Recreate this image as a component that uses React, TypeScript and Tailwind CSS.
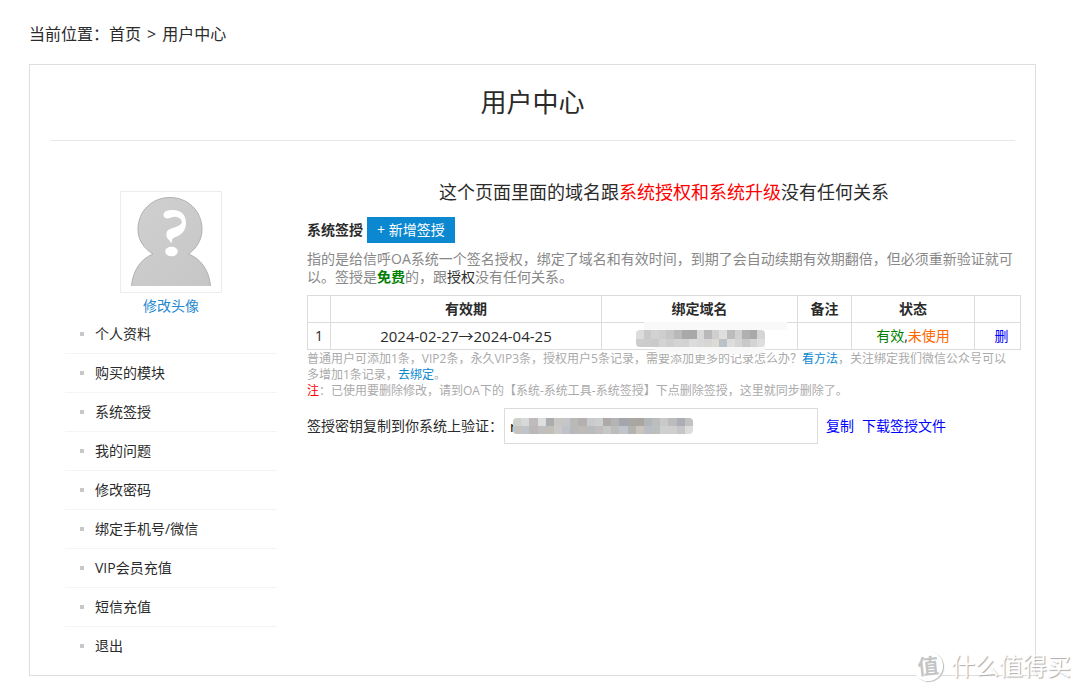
import React from "react";

const menu = [
  "个人资料",
  "购买的模块",
  "系统签授",
  "我的问题",
  "修改密码",
  "绑定手机号/微信",
  "VIP会员充值",
  "短信充值",
  "退出",
];

const domainCells = [
  ["#dcdcdc", "#c9c9c9", "#d2d2d2", "#cecece", "#c6c6c6", "#b9b9b9", "#a9a9a9", "#a8a8a8", "#d9d9d9", "#b9b9b9", "#cfcfcf", "#e0dedc", "#bcbcbc", "#d0d0d0", "#b0b0b0", "#a9a9a9", "#d5d5d5"],
  ["#cdcdcd", "#cccccc", "#cacaca", "#d4d4d4", "#cecece", "#d4d4d4", "#d2d2d2", "#dcdcdc", "#d8d8d8", "#d6d6d6", "#dedad4", "#b9c1c9", "#dcdcdc", "#d4d4d4", "#c9c9c9", "#d4d4d4", "#dedede"],
];

const keyCells = [
  ["#cfd2cc", "#d6d8da", "#bfbbbb", "#dcdedf", "#a9adad", "#c9c6c4", "#c4c6ca", "#b9b9b7", "#b5b0b0", "#c8cacc", "#cccfd0", "#aeaaa8", "#b4b4b4", "#a3a7ad", "#aaa6a2", "#aba5a0", "#b3b6b6", "#babebe", "#c9c9c9", "#bcbcbc", "#acaeb6", "#c2c2c2"],
  ["#c6c2be", "#bec4c8", "#bcb8b8", "#bfbfc0", "#c4beb8", "#c9c9c9", "#bfc2c9", "#b9b9b9", "#c0bab6", "#b8bcbe", "#c2bebe", "#c6c6c6", "#bbbdbd", "#bfc4ca", "#b3b3b1", "#cac4be", "#b9bec4", "#bbbfbf", "#cfcfcf", "#cfcfcf", "#c6c6c8", "#dcdcdc"],
];

function Mosaic({ rows, className }: { rows: string[][]; className: string }) {
  return (
    <svg
      className={className}
      viewBox={`0 0 ${rows[0].length} 2`}
      preserveAspectRatio="none"
      shapeRendering="crispEdges"
      aria-hidden="true"
    >
      {rows.map((row, y) =>
        row.map((fill, x) => <rect key={`${x}-${y}`} x={x} y={y} width="1" height="1" fill={fill} />),
      )}
    </svg>
  );
}

function Avatar() {
  return (
    <svg viewBox="0 0 100 100" className="size-[100px]" role="img" aria-label="头像">
      <defs>
        <linearGradient id="skin" x1="0" y1="0" x2="1" y2="1">
          <stop offset="0" stopColor="#d0d0d0" />
          <stop offset="1" stopColor="#c6c6c6" />
        </linearGradient>
      </defs>
      <path
        d="M10.500 94C12 78 20 67 32 62C22 56 17 47 17 37.500C17 19 31 5.500 49 5.500C67 5.500 81 19 81 37.500C81 47 76 56 67.500 62C80 67 88 78 89.500 94Z"
        fill="url(#skin)"
      />
      <path
        d="M10.500 94C12 78 20 67 32 62C22 56 17 47 17 37.500C17 19 31 5.500 49 5.500C67 5.500 81 19 81 37.500C81 47 76 56 67.500 62C80 67 88 78 89.500 94"
        fill="none"
        stroke="#b0b0b0"
        strokeWidth="1"
      />
      <path
        d="M42.500 23C42.500 19 47 18 52 18C60 18 65 23 65 31C65 39 60 43 54.500 45C51 46.500 51 47 51 50C50 51 49.500 51 49 49C46 47 45 44 45.500 41C46 37 51 36.500 56 34.500C62 32.500 62 28 58 26C55 24 52 25 49 26C45.500 27 42.500 26 42.500 23Z"
        fill="#fff"
      />
      <ellipse cx="50.500" cy="59.500" rx="6.300" ry="4.800" fill="#fff" />
    </svg>
  );
}

export default function App() {
  return (
    <div className="relative bg-white pt-[22px] pr-11 pb-[17px] pl-[29px] font-['Open_Sans','Noto_Sans_CJK_SC',sans-serif] text-sm text-[#2b2b2b]">
      <nav aria-label="当前位置" className="flex text-base leading-6">
        当前位置：<a href="#home">首页</a>
        <span className="px-[6px]">&gt;</span>
        <a href="#user">用户中心</a>
      </nav>

      <main className="mt-[18px] border border-[#dedede] pb-[10px]">
        <h1 className="mx-5 border-b border-[#e8e8e8] text-center text-[26px] leading-[75px]">用户中心</h1>

        <div className="flex gap-[30px] pr-[14px] pl-[35px]">
          <aside className="w-[212px] shrink-0 pt-[50px]">
            <div className="flex flex-col items-center">
              <div className="border border-[#ececec]">
                <Avatar />
              </div>
              <a href="#avatar" className="pt-1 leading-[18px] text-[#2488d0]">
                修改头像
              </a>
            </div>
            <ul>
              {menu.map((item) => (
                <li key={item} className="border-b border-[#f4f4f4] last:border-b-0">
                  <a href="#menu" className="flex items-center gap-[11px] pl-[15px] leading-[38px]">
                    <span className="size-1 bg-[#c8c8c8]" />
                    {item}
                  </a>
                </li>
              ))}
            </ul>
          </aside>

          <section className="min-w-0 flex-1 pt-[37px]">
            <h2 className="text-center text-lg leading-[28px]">
              这个页面里面的域名跟<span className="text-[#f00]">系统授权和系统升级</span>没有任何关系
            </h2>
            <div className="mt-[11px] flex items-center gap-1">
              <b>系统签授</b>
              <button type="button" className="bg-[#0b88cf] px-[10px] leading-[26px] text-white">
                + 新增签授
              </button>
            </div>
            <p className="mt-[7px] leading-[18px] text-[#888]">
              指的是给信呼OA系统一个签名授权，绑定了域名和有效时间，到期了会自动续期有效期翻倍，但必须重新验证就可以。签授是
              <b className="text-[#008000]">免费</b>的，跟<span className="text-[#2b2b2b]">授权</span>没有任何关系。
            </p>

            <table className="mt-[9px] w-full table-fixed border-collapse text-center leading-[26px] [&_td]:border [&_td]:border-[#dcdcdc] [&_td]:p-0 [&_th]:border [&_th]:border-[#dcdcdc] [&_th]:p-0">
              <colgroup>
                <col className="w-[23px]" />
                <col />
                <col className="w-[196px]" />
                <col className="w-[54px]" />
                <col className="w-[123px]" />
                <col className="w-[46px]" />
              </colgroup>
              <thead>
                <tr>
                  <th></th>
                  <th>有效期</th>
                  <th>绑定域名</th>
                  <th>备注</th>
                  <th>状态</th>
                  <th></th>
                </tr>
              </thead>
              <tbody>
                <tr>
                  <td>1</td>
                  <td className="text-[15px]">2024-02-27→2024-04-25</td>
                  <td>
                    <div className="relative h-[26px]">
                      <div className="absolute -top-px left-[42px] h-2 w-[143px] bg-[#f9f9f9]" />
                      <div className="absolute top-[23px] left-[52px] h-2 w-[112px] rounded-b-full bg-[#f8f8f8]" />
                      <Mosaic rows={domainCells} className="absolute top-[7px] left-[34px] h-[17px] w-[129px] rounded-sm" />
                    </div>
                  </td>
                  <td></td>
                  <td>
                    <span className="text-[#008000]">有效</span>,<span className="text-[#ff6600]">未使用</span>
                  </td>
                  <td className="text-[#00f]">
                    <a href="#delete" className="pl-2">删</a>
                  </td>
                </tr>
              </tbody>
            </table>

            <div className="pt-px pr-2 text-xs leading-4 text-[#aaa]">
              <p>
                普通用户可添加1条，VIP2条，永久VIP3条，授权用户5条记录，需要添加更多的记录怎么办？
                <a href="#method" className="text-[#0b88cf]">看方法</a>，关注绑定我们微信公众号可以多增加1条记录，
                <a href="#bind" className="text-[#0b88cf]">去绑定</a>。
              </p>
              <p>
                <span className="text-[#f00]">注</span>：已使用要删除修改，请到OA下的【系统-系统工具-系统签授】下点删除签授，这里就同步删除了。
              </p>
            </div>

            <div className="mt-[9px] flex items-center">
              <label htmlFor="key">签授密钥复制到你系统上验证：</label>
              <div className="relative ml-px">
                <input
                  id="key"
                  readOnly
                  defaultValue="r"
                  className="block h-9 w-[314px] border border-[#dcdcdc] px-[5px] text-black outline-none"
                />
                <Mosaic rows={keyCells} className="absolute top-[10px] left-[9px] h-4 w-[180px] rounded-sm" />
              </div>
              <button type="button" className="ml-2 text-[#00f]">复制</button>
              <a href="#download" className="ml-2 text-[#00f]">下载签授文件</a>
            </div>
          </section>
        </div>
      </main>

      <div className="absolute right-[9px] bottom-[12px] flex items-center gap-2 text-white [text-shadow:1px_1px_1px_#aaa]">
        <span className="flex size-[30px] -rotate-6 items-center justify-center rounded-full bg-white text-[21px] leading-none font-bold text-[#c4c4c4] shadow-[1px_1px_1px_#bbb] [text-shadow:none]">
          值
        </span>
        <span className="text-2xl leading-[30px]">什么值得买</span>
      </div>
    </div>
  );
}
